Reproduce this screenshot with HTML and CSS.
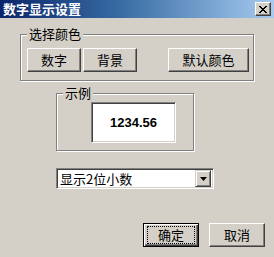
FILE: index.html
```html
<!DOCTYPE html>
<html>
<head>
<meta charset="utf-8">
<link rel="stylesheet" href="styles.css">
</head>
<body>
<div class="dialog">
  <div class="titlebar">
    <span class="title">数字显示设置</span>
    <button class="close" type="button" aria-label="关闭">
      <svg width="8" height="7" viewBox="0 0 8 7"><path d="M0 0h2v1h1v1h2V1h1V0h2v1H7v1H6v1H5v1h1v1h1v1h1v1H6V6H5V5H3v1H2v1H0V6h1V5h1V4h1V3H2V2H1V1H0z" fill="#000"/></svg>
    </button>
  </div>

  <div class="group group-color">
    <span class="legend">选择颜色</span>
    <div class="btn-row">
      <button class="btn btn-sm" type="button">数字</button>
      <button class="btn btn-sm" type="button">背景</button>
      <button class="btn btn-wide" type="button">默认颜色</button>
    </div>
  </div>

  <div class="group group-sample">
    <span class="legend">示例</span>
    <div class="sample">1234.56</div>
  </div>

  <div class="combo">
    <span class="combo-text">显示2位小数</span>
    <span class="combo-btn">
      <svg width="7" height="4" viewBox="0 0 7 4"><path d="M0 0h7L3.5 4z" fill="#000"/></svg>
    </span>
  </div>

  <div class="footer">
    <button class="btn btn-default" type="button"><span class="focus">确定</span></button>
    <button class="btn btn-dlg" type="button">取消</button>
  </div>
</div>
</body>
</html>
```

FILE: styles.css
```css
* { box-sizing: border-box; }
html, body { margin: 0; padding: 0; }
body {
  width: 274px;
  height: 257px;
  background: #d4d0c8;
  font-family: "Noto Sans CJK SC", "Liberation Sans", sans-serif;
  font-size: 13px;
  color: #000;
  overflow: hidden;
}
.dialog {
  width: 274px;
  height: 257px;
  display: flex;
  flex-direction: column;
  align-items: flex-start;
}
.titlebar {
  width: 274px;
  height: 18px;
  background: linear-gradient(to right, #0a246a 0%, #3a6ea5 45%, #a6caf0 100%);
  display: flex;
  align-items: center;
  justify-content: space-between;
  padding: 0 3px 0 3px;
}
.title {
  color: #fff;
  font-weight: bold;
  font-size: 13px;
  line-height: 18px;
}
.close {
  width: 16px;
  height: 14px;
  padding: 0;
  margin: 0;
  background: #d4d0c8;
  border: 1px solid;
  border-color: #fff #404040 #404040 #fff;
  box-shadow: inset -1px -1px 0 #808080;
  display: flex;
  align-items: center;
  justify-content: center;
}
.group {
  position: relative;
  border: 1px solid #808080;
  box-shadow: inset 1px 1px 0 #fff, 1px 1px 0 #fff;
}
.legend {
  position: absolute;
  top: -9px;
  left: 6px;
  padding: 0 2px 0 2px;
  background: #d4d0c8;
  line-height: 16px;
  font-size: 13px;
}
.group-color {
  margin: 16px 0 0 20px;
  width: 234px;
  height: 47px;
  padding: 13px 4px 0 6px;
}
.btn-row {
  display: flex;
  gap: 2px;
}
.btn {
  font-family: "Noto Sans CJK SC", "Liberation Sans", sans-serif;
  font-size: 13px;
  color: #000;
  background: #d4d0c8;
  border: 1px solid;
  border-color: #fff #404040 #404040 #fff;
  box-shadow: inset -1px -1px 0 #808080;
  height: 24px;
  padding: 0;
  margin: 0;
  line-height: 20px;
  display: flex;
  align-items: center;
  justify-content: center;
}
.btn-sm { width: 54px; }
.btn-wide { width: 81px; margin-left: auto; }
.group-sample {
  margin: 12px 0 0 56px;
  width: 138px;
  height: 58px;
  padding: 8px 0 0 34px;
}
.sample {
  width: 85px;
  height: 41px;
  background: #fff;
  border: 1px solid;
  border-color: #808080 #fff #fff #808080;
  box-shadow: inset 1px 1px 0 #404040, inset -1px -1px 0 #d4d0c8;
  font-family: "Liberation Sans", sans-serif;
  font-weight: bold;
  font-size: 13px;
  display: flex;
  align-items: center;
  justify-content: center;
}
.combo {
  margin: 17px 0 0 56px;
  width: 158px;
  height: 21px;
  background: #fff;
  border: 1px solid;
  border-color: #808080 #fff #fff #808080;
  box-shadow: inset 1px 1px 0 #404040, inset -1px -1px 0 #d4d0c8;
  padding: 2px;
  display: flex;
  align-items: center;
}
.combo-text {
  flex: 1;
  line-height: 17px;
  padding-left: 1px;
}
.combo-btn {
  width: 16px;
  height: 17px;
  background: #d4d0c8;
  border: 1px solid;
  border-color: #d4d0c8 #404040 #404040 #d4d0c8;
  box-shadow: inset 1px 1px 0 #fff, inset -1px -1px 0 #808080;
  display: flex;
  align-items: center;
  justify-content: center;
}
.footer {
  margin-top: 34px;
  width: 274px;
  display: flex;
  justify-content: flex-end;
  gap: 10px;
  padding-right: 9px;
}
.btn-dlg { width: 56px; }
.btn-default {
  width: 56px;
  border: 1px solid #000;
  box-shadow: inset 1px 1px 0 #fff, inset -1px -1px 0 #404040, inset -2px -2px 0 #808080;
}
.focus {
  display: flex;
  align-items: center;
  justify-content: center;
  width: 46px;
  height: 16px;
  outline: 1px dotted #000;
}
```
